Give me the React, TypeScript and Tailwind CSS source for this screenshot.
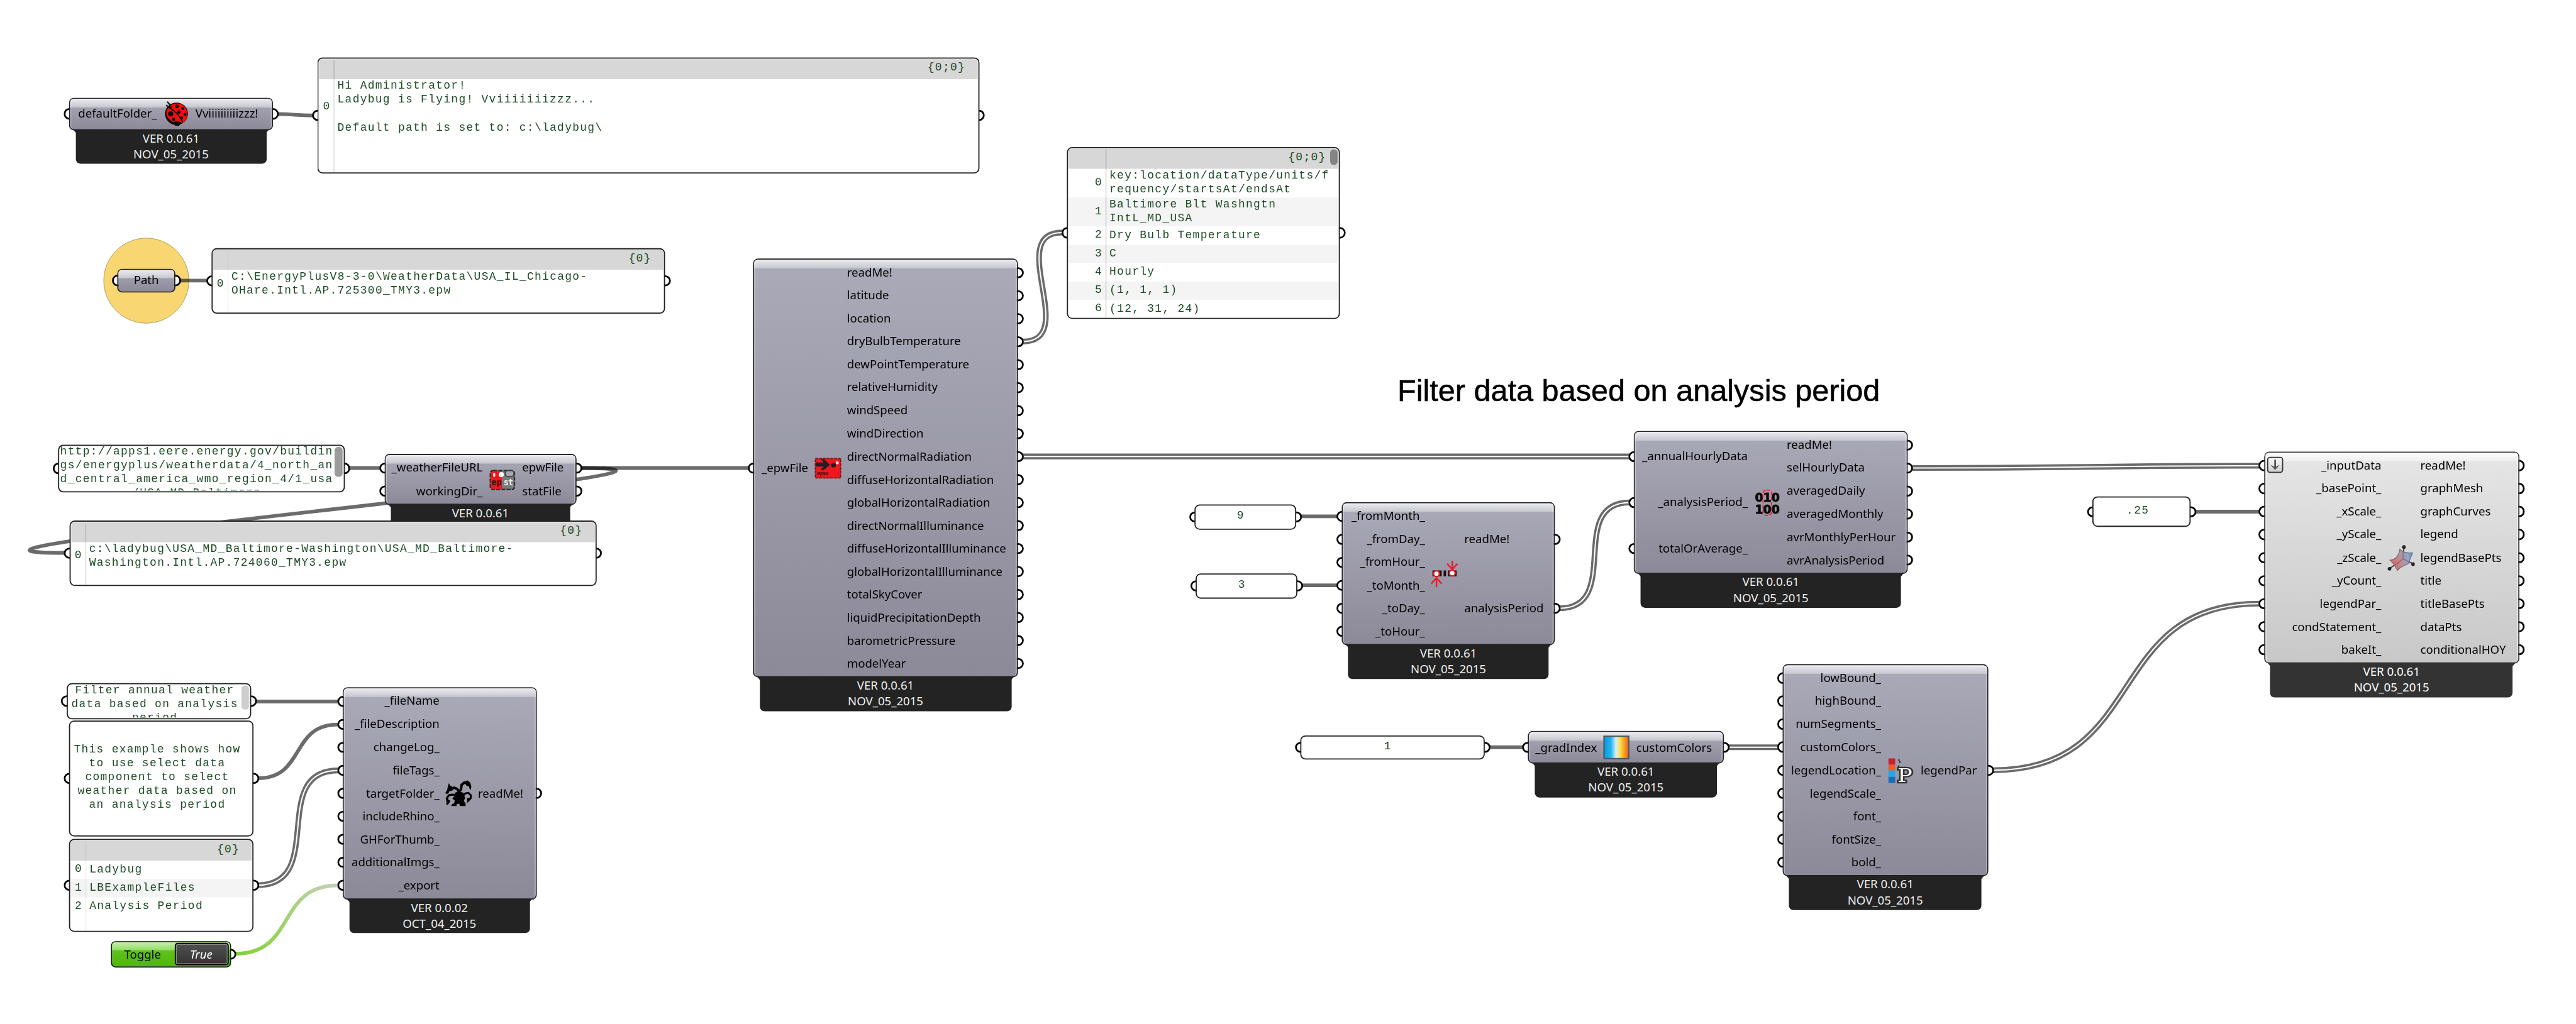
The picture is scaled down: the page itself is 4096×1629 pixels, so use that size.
import React from "react";

/* ---------- shared geometry ---------- */

type Box = { x: number; y: number; w: number; h: number };

const place = ({ x, y, w, h }: Box): React.CSSProperties => ({ left: x, top: y, width: w, height: h });

const MONO = "font-['Liberation_Mono',monospace] text-[19.6px] leading-[24.2px] tracking-[1.43px] text-[#1d4a24]";
const SANS = "font-['Noto_Sans','Open_Sans',sans-serif] text-[20.4px] leading-[28px] tracking-[-0.03px]";

/* ---------- wires ---------- */

type WireProps = { from: [number, number]; to: [number, number]; double?: boolean; reach?: number; stroke?: string };

function Wire({ from, to, double, reach, stroke = "#000" }: WireProps) {
  const d = reach ?? Math.hypot(to[0] - from[0], to[1] - from[1]) / 2;
  const path = `M${from[0]} ${from[1]}C${from[0] + d} ${from[1]} ${to[0] - d} ${to[1]} ${to[0]} ${to[1]}`;
  if (double) {
    return (
      <g fill="none">
        <path d={path} stroke="#6b6b6b" strokeWidth={10} />
        <path d={path} stroke="#fff" strokeWidth={2.2} />
      </g>
    );
  }
  return <path d={path} fill="none" stroke={stroke} strokeOpacity={stroke === "#000" ? 0.58 : 1} strokeWidth={6.4} />;
}

function Wires() {
  return (
    <svg className="absolute left-0 top-0" width={4482} height={1782} viewBox="0 0 4482 1782">
      <defs>
        <linearGradient id="toggleWire" gradientUnits="userSpaceOnUse" x1="411" y1="1660" x2="586" y2="1541">
          <stop offset="0" stopColor="#80cf38" />
          <stop offset="0.35" stopColor="#97d45c" />
          <stop offset="1" stopColor="#c3d0b8" />
        </linearGradient>
      </defs>
      <Wire from={[482, 198.5]} to={[545, 201]} />
      <Wire from={[312, 488.3]} to={[361, 488.3]} />
      <Wire from={[606, 814.5]} to={[661, 814.5]} />
      <Wire from={[1010, 814.5]} to={[1303, 814.5]} />
      <Wire from={[1010, 814.5]} to={[113, 962.3]} reach={400} />
      <Wire from={[1779, 594.5]} to={[1848, 404.7]} double />
      <Wire from={[1779, 794.5]} to={[2835, 794.5]} double />
      <Wire from={[444, 1221]} to={[588, 1221]} />
      <Wire from={[448, 1354.5]} to={[588, 1261]} />
      <Wire from={[448, 1540.7]} to={[588, 1341]} double />
      <Wire from={[409, 1660]} to={[588, 1541]} stroke="url(#toggleWire)" />
      <Wire from={[2262, 898.7]} to={[2327, 898.7]} />
      <Wire from={[2264, 1018.7]} to={[2327, 1018.7]} />
      <Wire from={[2713, 1058.7]} to={[2835, 874.6]} double />
      <Wire from={[3327, 814.6]} to={[3931, 810.6]} double />
      <Wire from={[3818, 890.6]} to={[3931, 890.6]} />
      <Wire from={[2590, 1300.6]} to={[2650, 1300.6]} />
      <Wire from={[3006, 1300.6]} to={[3094, 1300.6]} double />
      <Wire from={[3467, 1340.6]} to={[3931, 1050.6]} double />
    </svg>
  );
}

/* ---------- ports ---------- */

function Port({ side, top }: { side: "left" | "right"; top?: number }) {
  return (
    <span
      className={`absolute size-[19.5px] -translate-y-1/2 rounded-full border-[3.8px] border-black bg-white ${
        side === "left" ? "-left-[9.5px]" : "-right-[9.5px]"
      }`}
      style={{ top: top ?? "50%" }}
    />
  );
}

/* ---------- components ---------- */

type ComponentProps = Box & {
  inputs: string[];
  outputs: string[];
  inW: number;
  outX: number;
  icon?: React.ReactNode;
  version: [string, string];
  foot: [number, number, number];
  light?: boolean;
  children?: React.ReactNode;
};

function Column({ names, align }: { names: string[]; align: "left" | "right" }) {
  return (
    <div className="flex h-full flex-col">
      {names.map((n) => (
        <div key={n} className={`flex min-h-0 flex-1 items-center ${align === "right" ? "justify-end" : "justify-start"}`}>
          <span className="-translate-y-px whitespace-nowrap">{n}</span>
        </div>
      ))}
    </div>
  );
}

function GhComponent(p: ComponentProps) {
  const inner = p.h - 9;
  const rowY = (n: number, i: number) => 4.5 + (inner / n) * (i + 0.5);
  return (
    <section className={`absolute ${SANS}`} style={place(p)}>
      <div
        className={`absolute top-full -mt-[2px] flex flex-col items-center rounded-b-[8px] pt-[1px] ${
          p.light ? "bg-[#333] text-white" : "bg-[#232323] text-[#eee]"
        }`}
        style={{ left: p.foot[0] - p.x, width: p.foot[1] - p.foot[0], height: p.foot[2] - p.y - p.h + 2 }}
      >
        <span>{p.version[0]}</span>
        <span>{p.version[1]}</span>
      </div>
      <div
        className={`absolute top-full -mt-[3px] h-[8px] [clip-path:polygon(0_0,100%_0,calc(100%-7px)_100%,7px_100%)] ${
          p.light ? "bg-[#333]" : "bg-[#232323]"
        }`}
        style={{ left: p.foot[0] - p.x - 6, width: p.foot[1] - p.foot[0] + 12 }}
      />
      {p.inputs.map((n, i) => (
        <Port key={n} side="left" top={rowY(p.inputs.length, i)} />
      ))}
      {p.outputs.map((n, i) => (
        <Port key={n} side="right" top={rowY(p.outputs.length, i)} />
      ))}
      <div
        className={`relative h-full rounded-[9px] border-[2.6px] py-[2px] text-black ${
          p.light
            ? "border-[#333] bg-linear-to-b from-[#e6e6e6] to-[#c8c8c8]"
            : "border-[#222226] bg-linear-to-b from-[#abaab9] to-[#8c8a98]"
        }`}
      >
        <div
          className={`absolute inset-x-0 top-0 h-[15px] rounded-t-[6px] bg-linear-to-b ${
            p.light ? "from-[#fdfdfd] to-[#eeeeee]" : "from-[#ebebf0] to-[#c6c6ce]"
          }`}
        />
        <div
          className={`absolute inset-0 rounded-[6px] border-2 border-b-0 ${
            p.light ? "border-white/50" : "border-white/35"
          }`}
        />
        <div className="relative flex h-full items-stretch">
          <div className="shrink-0" style={{ width: p.inW - 2 }}>
            <Column names={p.inputs} align="right" />
          </div>
          <div className="flex shrink-0 items-center justify-center" style={{ width: p.outX - p.inW + 1 }}>
            <span className="block size-[48px]">{p.icon}</span>
          </div>
          <div className="flex-1">
            <Column names={p.outputs} align="left" />
          </div>
        </div>
        {p.children}
      </div>
    </section>
  );
}

/* ---------- panels ---------- */

function PanelFrame({ children, ...b }: Box & { children: React.ReactNode }) {
  return (
    <section className={`absolute ${MONO}`} style={place(b)}>
      <Port side="left" />
      <Port side="right" />
      <div className="relative h-full overflow-hidden rounded-[9px] border-[2.6px] border-[#222] bg-white">{children}</div>
    </section>
  );
}

function Scrollbar({ h, tone }: { h: number; tone: string }) {
  return <span className={`absolute right-[2px] top-[2px] w-[13.5px] rounded-[6px] ${tone}`} style={{ height: h }} />;
}

type ListRow = { lines: string[]; h: number };

function ListPanel({
  path,
  rows,
  gutter,
  scroll,
  ...b
}: Box & { path: string; rows: ListRow[]; gutter: number; scroll?: React.ReactNode }) {
  return (
    <PanelFrame {...b}>
      <div className="flex h-full flex-col px-[1px] pt-[1px]">
        <header className="flex h-[35px] shrink-0 items-start justify-end rounded-t-[5px] bg-[#d7d7d7] pr-[21px] pt-[3.5px]">
          {path}
        </header>
        {rows.map((r, i) => (
          <div key={i} className={`flex shrink-0 items-center ${i % 2 ? "bg-[#f4f4f4]" : "bg-white"}`} style={{ height: r.h }}>
            <span className="shrink-0 -translate-y-[1px] text-right" style={{ width: gutter - 7.5 }}>
              {i}
            </span>
            <div className="ml-[12px] -translate-y-[0.8px] whitespace-pre">
              {r.lines.map((l, j) => (
                <div key={j} className="h-[24.2px]">
                  {l}
                </div>
              ))}
            </div>
          </div>
        ))}
      </div>
      <span className="absolute bottom-0 top-[3px] w-[1.5px] bg-black/12" style={{ left: gutter - 1.5 }} />
      {scroll}
    </PanelFrame>
  );
}

function TextPanel({ lines, scroll, top, pr = 16, ...b }: Box & { lines: string[]; scroll?: React.ReactNode; top?: number; pr?: number }) {
  return (
    <PanelFrame {...b}>
      <div
        className={`flex flex-col items-center overflow-hidden whitespace-pre ${top === undefined ? "h-full justify-center pb-[3px]" : "h-[calc(100%-1px)]"}`}
        style={{ paddingRight: pr }}
      >
        {lines.map((l, i) => (
          <div key={i} className="relative h-[24.2px] shrink-0" style={{ top: top ?? 0 }}>
            {l}
          </div>
        ))}
      </div>
      {scroll}
    </PanelFrame>
  );
}

/* ---------- icons (48 × 48) ---------- */

const LadybugIcon = () => (
  <svg viewBox="0 0 48 48" className="size-full">
    <path d="M13 9l-5-6M10 12L6 9" stroke="#222" strokeWidth="2.6" fill="none" />
    <ellipse cx="24" cy="24" rx="20" ry="19.500" fill="#0c0c0c" />
    <path d="M12 11C19 4 34 4 40 14c5 10 3 20-4 25-8 4-18 2-24-5C4 27 5 18 12 11z" fill="#f40b0b" />
    <path d="M9 12c10 5 21 15 26 27" stroke="#0c0c0c" strokeWidth="1.8" fill="none" />
    <circle cx="14" cy="24" r="4.6" fill="#0c0c0c" />
    <circle cx="13" cy="13" r="2.600" fill="#0c0c0c" />
    <circle cx="25" cy="11" r="3.2" fill="#0c0c0c" />
    <circle cx="35" cy="15" r="2.600" fill="#0c0c0c" />
    <circle cx="28" cy="21" r="2.8" fill="#0c0c0c" />
    <circle cx="39" cy="25" r="2.6" fill="#0c0c0c" />
    <circle cx="33" cy="31" r="2.6" fill="#0c0c0c" />
    <circle cx="19" cy="34" r="2.8" fill="#0c0c0c" />
    <path d="M18 40c4-4 11-4 15 0l-5 5h-6z" fill="#0c0c0c" />
  </svg>
);

const WeatherIcon = () => (
  <svg viewBox="0 0 48 48" className="size-full">
    <rect x="3" y="8" width="42" height="33" rx="5" fill="#777b7c" stroke="#2b2b2b" strokeWidth="2.5" strokeDasharray="7 2" />
    <path d="M8 9h15v31H8a4 4 0 0 1-4-4V13a4 4 0 0 1 4-4z" fill="#f2161b" />
    <rect x="29" y="8" width="15" height="10" rx="4" fill="#a6a5b4" stroke="#3a3a3a" strokeWidth="1.8" />
    <rect x="8" y="12" width="3.5" height="7" rx="1.7" fill="#fff" />
    <circle cx="22" cy="15" r="4.6" fill="#fff" />
    <text x="5" y="34" fontFamily="DejaVu Sans Mono, monospace" fontWeight="bold" fontSize="15" fill="#3a0c0e" textLength="18">ep</text>
    <text x="26" y="34" fontFamily="DejaVu Sans Mono, monospace" fontWeight="bold" fontSize="15" fill="#f2f2f2" textLength="17">st</text>
  </svg>
);

const EpwIcon = () => (
  <svg viewBox="0 0 48 48" className="size-full">
    <rect x="2.5" y="7" width="44" height="34" fill="#f0161d" stroke="#6e1a1e" strokeWidth="2" strokeDasharray="5 1.5" />
    <path d="M3 14h14l-5-6h5l11 10-11 9h-6l6-6H3z" fill="#221f20" />
    <circle cx="34" cy="18.500" r="4.2" fill="#221f20" />
    <rect x="38" y="12" width="5" height="5" rx="1" fill="#ffd9d9" />
    <text x="5" y="36" fontFamily="DejaVu Sans, sans-serif" fontStyle="italic" fontWeight="bold" fontSize="10" fill="#5d1215" textLength="20">epw</text>
  </svg>
);

const HydraIcon = () => (
  <svg viewBox="0 0 48 48" className="size-full" fill="none" stroke="#000" strokeLinejoin="round">
    <path d="M26 27l-1-7 3-3 1-8 5-4 6 1" strokeWidth="4.4" />
    <path d="M34 4l5-3 2 2 3 2 2 7-1 6-2-2-1-4-5-2z" fill="#000" stroke="none" />
    <path d="M23 26l1-6-3-4-5-2-5 2" strokeWidth="4.4" />
    <path d="M5 12l2-6 2 4 5 3-1 6-5 1-2 4-4 1-1-3 3-4z" fill="#000" stroke="none" />
    <path d="M31 29l4-5 6-1 4 4v5l-3 3" strokeWidth="3.4" />
    <path d="M38 33l5-2v6l-5 4 1-4z" fill="#000" stroke="none" />
    <path d="M19 27l-6-1-6 1-3 4v5" strokeWidth="3.6" />
    <path d="M1 31l3 3 5 2-1 4-3 4-3-1 1-4z" fill="#000" stroke="none" />
    <path d="M17 23l8-3 7 3 3 9-2 5 3 5v4H26l-1-4h-4l-1 4h-9l1-3 4-2 1-5-4-3 4-5z" fill="#000" stroke="none" />
  </svg>
);

const PeriodIcon = () => (
  <svg viewBox="0 0 48 48" className="size-full">
    <path d="M3 18h16v10H3zM22.500 18h4v10h-4zM30 18h15v10H30z" fill="#111" />
    <circle cx="10" cy="23.5" r="5" fill="#fff" stroke="#e51c23" strokeWidth="2.6" />
    <circle cx="37.500" cy="22.5" r="5" fill="#fff" stroke="#e51c23" strokeWidth="2.6" />
    <path d="M37.500 1v14M28.500 6l9 10 9-10M10 47V32M1 41l9-10 9 10" fill="none" stroke="#e8202a" strokeWidth="2.8" />
  </svg>
);

const BinaryIcon = () => (
  <svg viewBox="0 0 48 48" className="size-full" fontFamily="DejaVu Sans, sans-serif" fontWeight="bold" fontSize="21">
    <text x="3" y="22" textLength="43" lengthAdjust="spacingAndGlyphs" fill="#0a0a0a" stroke="#0a0a0a" strokeWidth="1">010</text>
    <text x="3" y="43" textLength="43" lengthAdjust="spacingAndGlyphs" fill="#0a0a0a" stroke="#0a0a0a" strokeWidth="1">100</text>
    <rect x="17" y="2" width="15" height="44" rx="6" fill="none" stroke="#f01a22" strokeWidth="1.8" strokeDasharray="6 3" />
  </svg>
);

const GradientIcon = () => (
  <svg viewBox="0 0 48 48" className="size-full">
    <defs>
      <linearGradient id="spectrum">
        <stop offset="0" stopColor="#009bdf" />
        <stop offset="0.28" stopColor="#22b4f0" />
        <stop offset="0.48" stopColor="#d8eef4" />
        <stop offset="0.66" stopColor="#f7e04a" />
        <stop offset="0.85" stopColor="#f7941d" />
        <stop offset="1" stopColor="#ef5a22" />
      </linearGradient>
    </defs>
    <rect x="2.500" y="4.500" width="43" height="39" fill="url(#spectrum)" stroke="#4c5a5c" strokeWidth="2.4" />
  </svg>
);

const LegendIcon = () => (
  <svg viewBox="0 0 48 48" className="size-full">
    <rect x="2" y="3" width="12" height="11" fill="#cc1f30" />
    <rect x="2" y="14" width="12" height="10" fill="#f15a29" />
    <rect x="2" y="24" width="12" height="11" fill="#1cabe8" />
    <rect x="2" y="35" width="12" height="11" fill="#1a6fb8" />
    <path d="M19 6c3-1 4 2 3 5M20 15v4" stroke="#333" strokeWidth="2.4" fill="none" strokeDasharray="3 1.5" />
    <text x="18" y="44" fontFamily="DejaVu Serif, serif" fontSize="32" fill="#fff" stroke="#333" strokeWidth="5" paintOrder="stroke" textLength="26" lengthAdjust="spacingAndGlyphs">P</text>
  </svg>
);

const MeshIcon = () => (
  <svg viewBox="0 0 48 48" className="size-full">
    <path d="M29 5L27 26M27 26L5 42M27 26l18 8" stroke="#3b3b3b" strokeWidth="2" />
    <circle cx="29" cy="5" r="3.2" fill="#222" />
    <circle cx="4" cy="43" r="3.2" fill="#222" />
    <circle cx="45" cy="35" r="3.2" fill="#222" />
    <defs>
      <linearGradient id="mesh" x1="0" y1="0.6" x2="1" y2="0.3">
        <stop offset="0" stopColor="#ef4b48" />
        <stop offset="0.5" stopColor="#b58a97" />
        <stop offset="0.8" stopColor="#8f9fc4" />
        <stop offset="1" stopColor="#3b86d6" />
      </linearGradient>
    </defs>
    <path d="M22 9c5 6 13 7 22 6-2 8-6 12-6 17-4 6-14 4-20 14-4-6-7-14-13-18 9-1 15-7 17-19z" fill="url(#mesh)" fillOpacity="0.9" stroke="#6e7184" strokeWidth="1.4" />
    <path d="M27 12l1 13-14 12M28 25l10 7" stroke="#62586b" strokeWidth="1.2" fill="none" opacity="0.6" />
  </svg>
);

/* ---------- page ---------- */

const NOV: [string, string] = ["VER 0.0.61", "NOV_05_2015"];

export default function App() {
  return (
    <main className="relative h-[1629px] w-[4096px] overflow-hidden bg-white">
      <div className="absolute left-0 top-0 h-[1782px] w-[4482px] origin-top-left scale-[0.914]">
        <div className="absolute left-[180px] top-[413.5px] size-[149px] rounded-full border-[1.6px] border-[#a5955c] bg-[#f8d672]" />
        <Wires />

        <h1 className="absolute left-[2431px] top-[650px] whitespace-nowrap font-['Liberation_Sans',sans-serif] text-[53.2px] leading-[60px] text-black [-webkit-text-stroke:0.6px_#000]">
          Filter data based on analysis period
        </h1>

        <GhComponent x={120} y={170} w={355} h={56.7} inputs={["defaultFolder_"]} outputs={["Vviiiiiiiiiizzz!"]} inW={153} outX={219} icon={<LadybugIcon />} version={NOV} foot={[131.5, 463.5, 285]} />
        <ListPanel x={552} y={99.5} w={1151.5} h={202} path="{0;0}" gutter={27.500} rows={[{ lines: ["Hi Administrator!", "Ladybug is Flying! Vviiiiiiizzz...", " ", "Default path is set to: c:\\ladybug\\"], h: 98 }]} />

        <section className={`absolute ${SANS}`} style={place({ x: 204, y: 467.7, w: 101, h: 41.5 })}>
          <Port side="left" />
          <Port side="right" />
          <div className="relative flex h-full items-center justify-center rounded-[8px] border-[2.6px] border-[#222226] bg-linear-to-b from-[#abaab9] to-[#8c8a98] text-black">
            <div className="absolute inset-x-0 top-0 h-[14px] rounded-t-[5px] bg-linear-to-b from-[#ebebf0] to-[#c6c6ce]" />
            <span className="relative -top-px">Path</span>
          </div>
        </section>
        <ListPanel x={368} y={431.700} w={789} h={114} path="{0}" gutter={27} rows={[{ lines: ["C:\\EnergyPlusV8-3-0\\WeatherData\\USA_IL_Chicago-", "OHare.Intl.AP.725300_TMY3.epw"], h: 50 }]} />

        <TextPanel x={101} y={773.7} w={498.500} h={83.600} top={-2} pr={16.5} lines={["http://apps1.eere.energy.gov/buildin", "gs/energyplus/weatherdata/4_north_an", "d_central_america_wmo_region_4/1_usa", "/USA_MD_Baltimore"]} scroll={<Scrollbar h={52} tone="bg-[#9b9b9b]" />} />
        <GhComponent x={669} y={790} w={334} h={89} inputs={["_weatherFileURL", "workingDir_"]} outputs={["epwFile", "statFile"]} inW={170.500} outX={238.500} icon={<WeatherIcon />} version={NOV} foot={[680, 991.5, 937]} />
        <ListPanel x={120.5} y={905.5} w={917} h={114} path="{0}" gutter={27} rows={[{ lines: ["c:\\ladybug\\USA_MD_Baltimore-Washington\\USA_MD_Baltimore-", "Washington.Intl.AP.724060_TMY3.epw"], h: 50 }]} />

        <GhComponent
          x={1310} y={450} w={461} h={729}
          inputs={["_epwFile"]}
          outputs={["readMe!", "latitude", "location", "dryBulbTemperature", "dewPointTemperature", "relativeHumidity", "windSpeed", "windDirection", "directNormalRadiation", "diffuseHorizontalRadiation", "globalHorizontalRadiation", "directNormalIlluminance", "diffuseHorizontalIlluminance", "globalHorizontalIlluminance", "totalSkyCover", "liquidPrecipitationDepth", "barometricPressure", "modelYear"]}
          inW={96} outX={162.500} icon={<EpwIcon />} version={NOV} foot={[1321.5, 1759.5, 1238]}
        />
        <ListPanel
          x={1856} y={255.7} w={475} h={299.6} path="{0;0}" gutter={66.5}
          rows={[
            { lines: ["key:location/dataType/units/f", "requency/startsAt/endsAt"], h: 50.2 },
            { lines: ["Baltimore Blt Washngtn", "IntL_MD_USA"], h: 50 },
            { lines: ["Dry Bulb Temperature"], h: 32.2 },
            { lines: ["C"], h: 32 },
            { lines: ["Hourly"], h: 32 },
            { lines: ["(1, 1, 1)"], h: 32 },
            { lines: ["(12, 31, 24)"], h: 32 },
          ]}
          scroll={<Scrollbar h={27} tone="bg-[#848484]" />}
        />

        <TextPanel x={115.5} y={1189.3} w={321.5} h={62.3} top={-1.5} pr={14} lines={["Filter annual weather", "data based on analysis", "period"]} scroll={<Scrollbar h={42} tone="bg-[#cdcdcd]" />} />
        <TextPanel x={120} y={1253.5} w={321} h={202} lines={["This example shows how", "to use select data", "component to select", "weather data based on", "an analysis period"]} pr={14} />
        <ListPanel x={120} y={1460} w={321} h={161.500} path="{0}" gutter={28} rows={[{ lines: ["Ladybug"], h: 32 }, { lines: ["LBExampleFiles"], h: 32 }, { lines: ["Analysis Period"], h: 32 }]} />

        <section className={`absolute ${SANS}`} style={place({ x: 192.5, y: 1637.5, w: 209, h: 46 })}>
          <Port side="right" />
          <div className="relative flex h-full items-stretch rounded-[8px] border-[2.6px] border-[#0d2a00] bg-linear-to-b from-[#63cc22] to-[#52b40c]">
            <div className="absolute inset-x-0 top-0 h-[14px] rounded-t-[5px] bg-linear-to-b from-[#c9efac] to-[#90dc60]" />
            <span className="relative flex w-[109px] items-center justify-center pb-[2px] pr-[2px] text-black">Toggle</span>
            <span className="relative my-[1.5px] flex flex-1 items-center justify-center rounded-[5px] border-[2.4px] border-black bg-linear-to-b from-[#505050] to-[#343434] pb-[2px] pr-[1px] italic text-white shadow-[inset_0_0_0_1.5px_#8a8a8a]">
              True
            </span>
            <span className="w-[2px]" />
          </div>
        </section>

        <GhComponent
          x={596} y={1196} w={337.5} h={369.5}
          inputs={["_fileName", "_fileDescription", "changeLog_", "fileTags_", "targetFolder_", "includeRhino_", "GHForThumb_", "additionalImgs_", "_export"]}
          outputs={["readMe!"]}
          inW={168.500} outX={234.5} icon={<HydraIcon />} version={["VER 0.0.02", "OCT_04_2015"]} foot={[607.5, 921.5, 1623.5]}
        />

        <TextPanel x={2078} y={878} w={177} h={43.5} lines={["9"]} />
        <TextPanel x={2080} y={998} w={177} h={43.5} lines={["3"]} />
        <GhComponent x={2334.4} y={874} w={371} h={249} inputs={["_fromMonth_", "_fromDay_", "_fromHour_", "_toMonth_", "_toDay_", "_toHour_"]} outputs={["readMe!", "analysisPeriod"]} inW={144.500} outX={212} icon={<PeriodIcon />} version={NOV} foot={[2345.5, 2694, 1182]} />

        <GhComponent
          x={2842.400} y={750} w={476.600} h={249}
          inputs={["_annualHourlyData", "_analysisPeriod_", "totalOrAverage_"]}
          outputs={["readMe!", "selHourlyData", "averagedDaily", "averagedMonthly", "avrMonthlyPerHour", "avrAnalysisPeriod"]}
          inW={198} outX={265} icon={<BinaryIcon />} version={NOV} foot={[2854, 3307.5, 1057.5]}
        />

        <TextPanel x={2262} y={1279.5} w={321} h={42} lines={["1"]} />
        <GhComponent x={2657.7} y={1272} w={341.500} h={57} inputs={["_gradIndex"]} outputs={["customColors"]} inW={120.500} outX={188} icon={<GradientIcon />} version={NOV} foot={[2670, 2987, 1387.500]} />
        <GhComponent
          x={3101.3} y={1155.800} w={358.200} h={369.500}
          inputs={["lowBound_", "highBound_", "numSegments_", "customColors_", "legendLocation_", "legendScale_", "font_", "fontSize_", "bold_"]}
          outputs={["legendPar"]}
          inW={171} outX={239} icon={<LegendIcon />} version={NOV} foot={[3112, 3447.500, 1583.700]}
        />

        <TextPanel x={3640} y={864} w={171} h={53.4} lines={[".25"]} pr={13} />
        <GhComponent
          light
          x={3938.6} y={785.8} w={444.400} h={369.500}
          inputs={["_inputData", "_basePoint_", "_xScale_", "_yScale_", "_zScale_", "_yCount_", "legendPar_", "condStatement_", "bakeIt_"]}
          outputs={["readMe!", "graphMesh", "graphCurves", "legend", "legendBasePts", "title", "titleBasePts", "dataPts", "conditionalHOY"]}
          inW={204} outX={271} icon={<MeshIcon />} version={NOV} foot={[3949.5, 4371.5, 1213.700]}
        >
          <span className="absolute left-[3px] top-[7.5px] flex size-[28px] items-center justify-center rounded-[5px] border-2 border-[#333] bg-linear-to-b from-[#fafafa] to-[#cfcfcf]">
            <svg viewBox="0 0 24 24" className="size-[24px]" fill="none" stroke="#555" strokeWidth="3">
              <path d="M12 3v15" />
              <path d="M4 12l8 9 8-9-8 4z" fill="#555" stroke="none" />
            </svg>
          </span>
        </GhComponent>
      </div>
    </main>
  );
}
